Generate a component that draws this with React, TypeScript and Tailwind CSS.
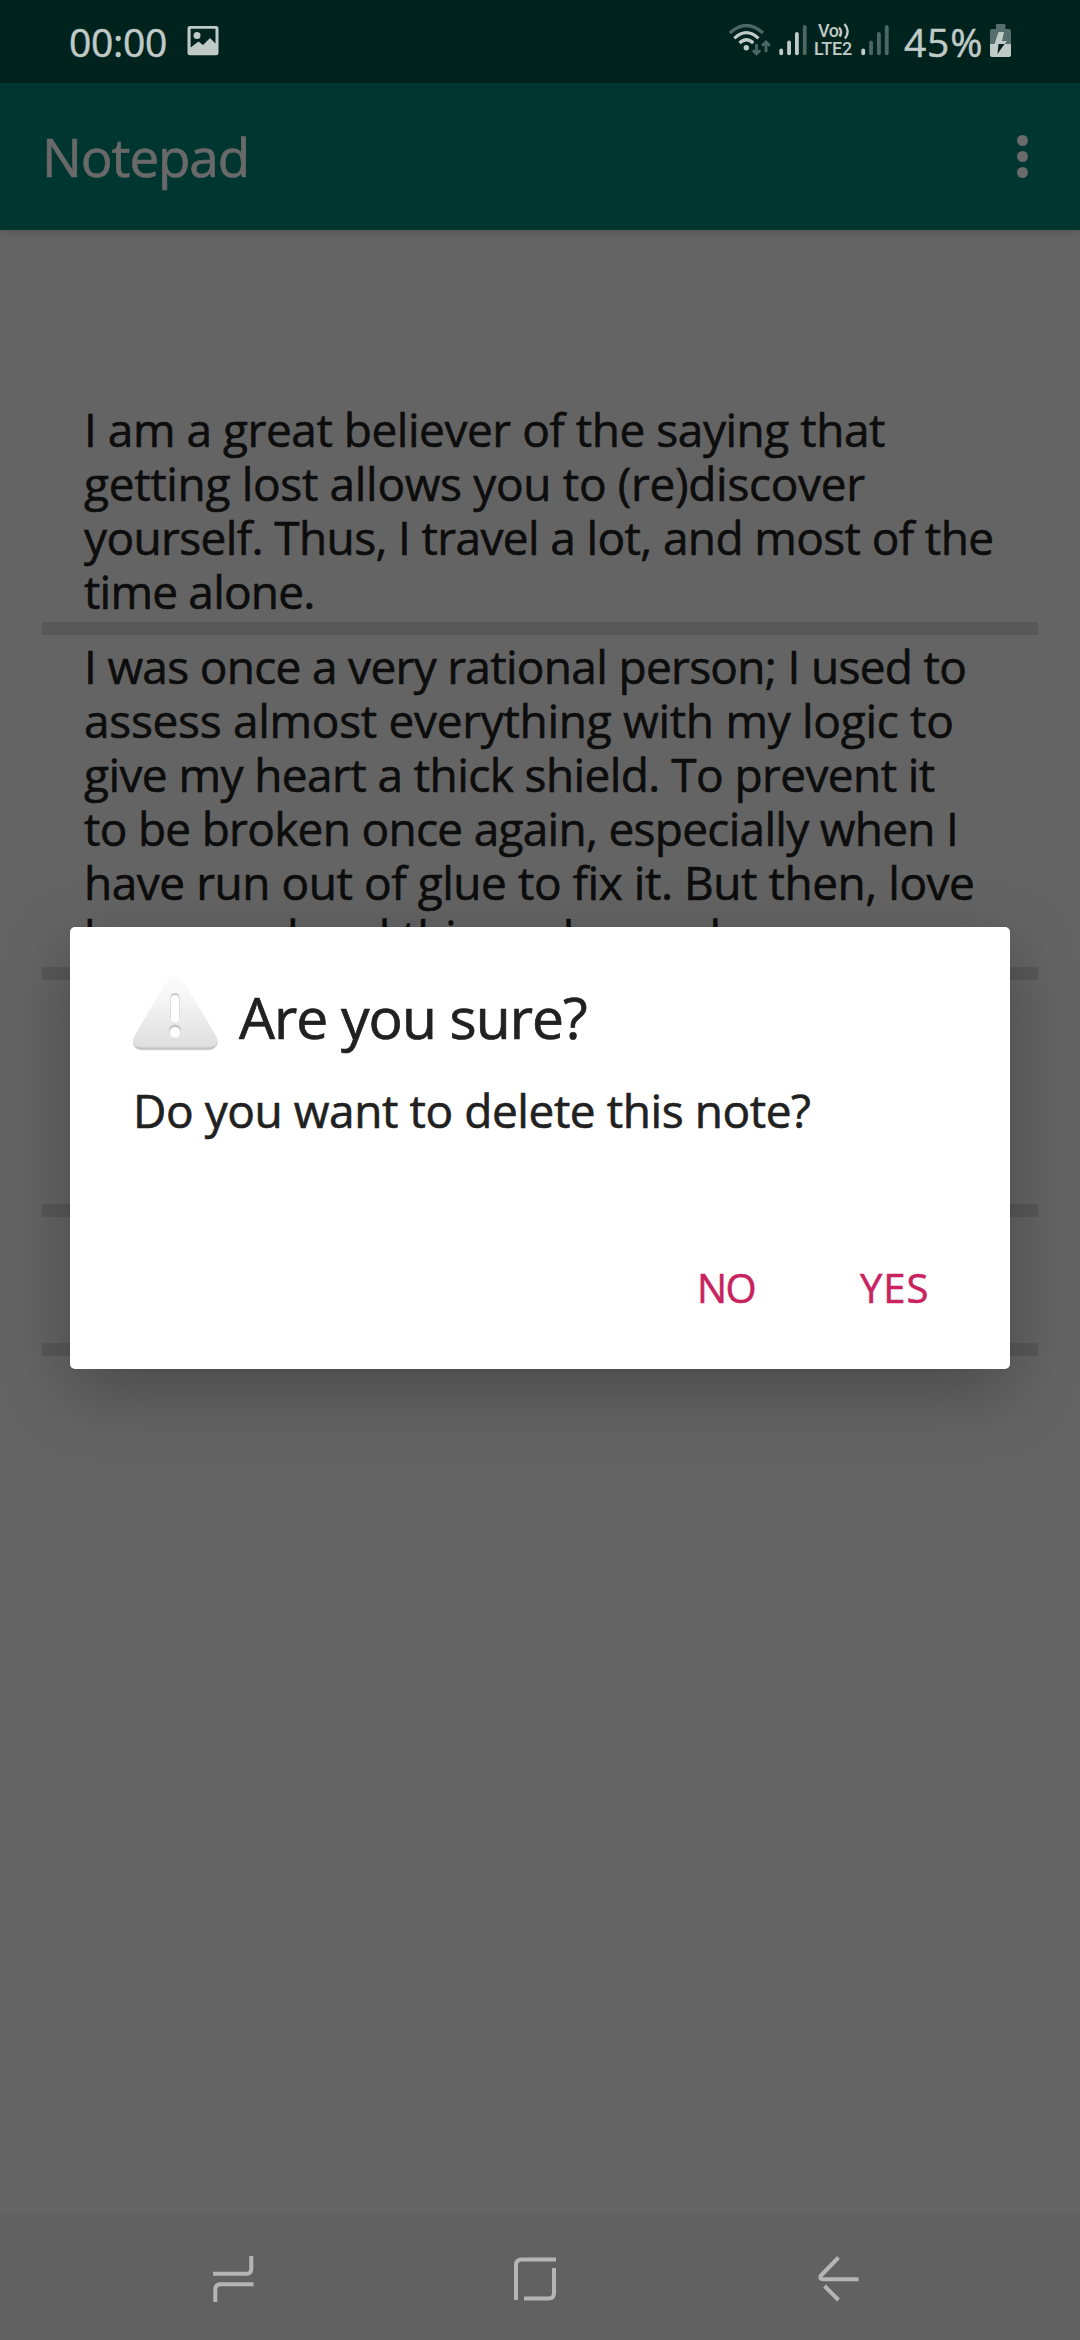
import type { ReactNode } from "react";

function ImageIcon() {
  return (
    <svg width="32" height="30" viewBox="0 0 32 30" className="fill-[#c0cac7]">
      <path
        fillRule="evenodd"
        d="M3 0H29Q31.5 0 31.5 2.5V27Q31.5 29.3 29 29.3H3Q.5 29.3 .5 27V2.500Q.5 0 3 0ZM3.600 2.800V21.500L11.500 15.500L16 19L23 12L28.500 17.500V2.800Z"
      />
      <circle cx="10" cy="9.5" r="3.500" />
    </svg>
  );
}

function WifiIcon() {
  return (
    <svg width="42" height="34" viewBox="0 0 42 34" fill="none" strokeLinecap="butt">
      <path d="M.8 9Q17.400-6 34 9" stroke="#4d6762" strokeWidth="3.200" />
      <path d="M5.300 14.300Q17.400 3 29.500 14.300" stroke="#c0cac7" strokeWidth="3.200" />
      <path d="M10.500 19Q17.400 12.500 24.300 19" stroke="#c0cac7" strokeWidth="3.200" />
      <circle cx="17.300" cy="23.800" r="2.700" fill="#c0cac7" />
      <path
        d="M27.500 20V30M23.800 26.300L27.500 29.900L31.200 26.300M37 28V18.500M33.200 21.800L37 18L40.800 21.800"
        stroke="#4d6762"
        strokeWidth="2.800"
      />
    </svg>
  );
}

function SignalIcon({ level }: { level: number }) {
  const tops = [26.5, 18.5, 10, 3];
  return (
    <svg width="28" height="34" viewBox="0 0 28 34" strokeWidth="3.800" strokeLinecap="round">
      {tops.map((top, i) => (
        <line
          key={top}
          x1={2.2 + i * 7.85}
          x2={2.2 + i * 7.85}
          y1={top}
          y2={29.3}
          stroke={i < level ? "#c0cac7" : "#4d6762"}
        />
      ))}
    </svg>
  );
}

function VoLteIcon() {
  return (
    <div className="flex w-[41px] flex-col font-[Roboto] text-[18px] font-medium leading-[18px] text-[#c0cac7]">
      <div className="flex pl-1">
        <span className="tracking-[-0.5px]">Vo</span>
        <svg width="13" height="18" viewBox="0 0 13 18" fill="none" stroke="#c0cac7" strokeWidth="2.400">
          <path d="M1 5.500Q5 9.500 1.500 14.500M6.500 2Q12.500 9 7 16.500" />
        </svg>
      </div>
      <span className="tracking-[-0.2px]">LTE2</span>
    </div>
  );
}

function BatteryIcon() {
  return (
    <svg width="21" height="34" viewBox="0 0 21 34">
      <path d="M6 1Q6 0 7 0H14Q15.500 0 15.500 1V5H19Q21 5 21 7V20H0V7Q0 5 2 5H6Z" fill="#566f6a" />
      <path d="M0 20H21V31Q21 33 19 33H2Q0 33 0 31Z" fill="#c0cac7" />
      <path d="M8.500 8H14L12 17H17L14.500 20H4.500Z" fill="#c0cac7" />
      <path d="M8.500 20H14.500L7.500 30Z" fill="#00231e" />
    </svg>
  );
}

function WarningIcon() {
  return (
    <svg width="86" height="78" viewBox="0 0 86 78">
      <defs>
        <linearGradient id="warn" x1="0" y1="0" x2="0" y2="1">
          <stop offset="0" stopColor="#fbfbfb" />
          <stop offset="0.3" stopColor="#f6f6f6" />
          <stop offset="1" stopColor="#dedede" />
        </linearGradient>
      </defs>
      <path d="M35.500 5Q42 -1 48 5Q51 8 83 61Q87 69 82 73Q80 76 75 76H9Q4 76 2 73Q-2 69 2 61Q33 8 35.500 5Z" fill="#f5f5f5" />
      <path d="M2 62H82Q87 68 82 72Q80 74.800 75 74.800H9Q4 74.800 2 72Q-2 68 2 62Z" fill="#c2c2c2" />
      <path d="M35.500 4Q42 -2 48 4Q51 7 82.500 60Q86.500 67 82 70.500Q79 72.500 75 72.500H9Q5 72.500 2 70.500Q-2 67 2 60Q33 7 35.500 4Z" fill="url(#warn)" />
      <rect x="37.500" y="18" width="9" height="28" rx="4.500" fill="#c9c9c9" />
      <rect x="38" y="20" width="8" height="27" rx="4" fill="#fff" />
      <circle cx="42" cy="55.500" r="6" fill="#c4c4c4" />
      <circle cx="42" cy="57.300" r="5.300" fill="#fff" />
    </svg>
  );
}

function StatusBar() {
  return (
    <div className="flex h-[83px] items-start bg-[#00231e] pl-[69px] pr-[69px] text-[39px] leading-[54px] text-[#c0cac7] [-webkit-text-stroke:0.5px]">
      <span className="w-[118px] pt-[15px] tracking-[-0.3px]">00:00</span>
      <div className="pt-[26px]">
        <ImageIcon />
      </div>
      <div className="ml-auto flex items-start">
        <div className="mr-2 pt-[24px]">
          <WifiIcon />
        </div>
        <div className="mr-[7px] pt-[24px]">
          <SignalIcon level={3} />
        </div>
        <div className="mr-[6px] pt-[22px] [-webkit-text-stroke:0px]">
          <VoLteIcon />
        </div>
        <div className="pt-[24px]">
          <SignalIcon level={1} />
        </div>
        <span className="ml-[15px] w-[86px] whitespace-nowrap pt-[15px] tracking-[0.8px]">45%</span>
        <div className="pt-[24px]">
          <BatteryIcon />
        </div>
      </div>
    </div>
  );
}

function AppBar() {
  return (
    <div className="relative flex h-[147px] items-center justify-between bg-[#003630] pl-[42px] pr-[52px] shadow-[0_2px_6px_rgba(0,0,0,0.15)]">
      <h1 className="text-[53px] leading-[72px] tracking-[-1.1px] text-[#696969] [-webkit-text-stroke:0.7px]">Notepad</h1>
      <div className="flex flex-col gap-[5px]">
        <span className="size-[11px] rounded-full bg-[#6a6a6a]" />
        <span className="size-[11px] rounded-full bg-[#6a6a6a]" />
        <span className="size-[11px] rounded-full bg-[#6a6a6a]" />
      </div>
    </div>
  );
}

function Note({ className, children }: { className: string; children?: ReactNode }) {
  return (
    <li className={`box-content overflow-hidden border-b-[13px] border-[#585858] pl-[42px] pt-1 ${className}`}>
      {children}
    </li>
  );
}

function NavBar() {
  return (
    <nav className="mt-auto flex h-[126px] items-start bg-[#616161] pl-[212px] pt-[40px]">
      <svg width="44" height="50" viewBox="0 0 44 50" fill="none" stroke="#b5b5b5" strokeWidth="4">
        <path d="M1 19.700H34.500Q39.300 19.700 39.300 14.500V2M41.500 30.300H8.500Q3.300 30.300 3.300 36V48" />
      </svg>
      <svg width="46" height="50" viewBox="0 0 46 50" fill="none" stroke="#b5b5b5" strokeWidth="4" className="ml-[256px]">
        <path d="M4 46V11Q4 5.500 9.500 5.500H44M42 14V39Q42 44.500 36.500 44.500H12" />
      </svg>
      <svg width="46" height="50" viewBox="0 0 46 50" fill="none" stroke="#b5b5b5" strokeWidth="4" className="ml-[258px]">
        <path d="M22.500 3.500L5 21.500Q3 25.200 7 25.200H42.500M8.500 32L22.500 46" />
      </svg>
    </nav>
  );
}

function Dialog() {
  return (
    <div
      role="dialog"
      className="flex h-[442px] w-[940px] flex-col rounded-[5px] bg-white pl-[63px] pt-[48px] text-[#212121] shadow-[0_22px_70px_rgba(0,0,0,0.27)]"
    >
      <div className="flex items-start">
        <WarningIcon />
        <h2 className="ml-5 mt-[3px] text-[57px] leading-[78px] tracking-[-1.02px] [-webkit-text-stroke:0.7px]">
          Are you sure?
        </h2>
      </div>
      <p className="mt-[27px] text-[46px] leading-[54px] tracking-[-0.43px] [-webkit-text-stroke:0.6px]">
        Do you want to delete this note?
      </p>
      <div className="mt-[124px] flex text-[40px] leading-[54px] text-[#c9235f] [-webkit-text-stroke:0.5px]">
        <button className="ml-[564px] w-[163px] text-left tracking-[-1.5px]">NO</button>
        <button className="tracking-[1px]">YES</button>
      </div>
    </div>
  );
}

export default function App() {
  return (
    <div className="relative flex h-[2340px] w-[1080px] flex-col overflow-hidden bg-[#646464] font-['Open_Sans',sans-serif]">
      <StatusBar />
      <AppBar />
      <ul className="mx-[42px] mt-[168px] whitespace-nowrap text-[46px] leading-[54px] text-[#0d0d0d] [-webkit-text-stroke:0.6px]">
        <Note className="h-[220px]">
          <span className="block tracking-[-0.47px]">I am a great believer of the saying that </span>
          <span className="block tracking-[-0.33px]">getting lost allows you to (re)discover </span>
          <span className="block tracking-[-0.63px]">yourself. Thus, I travel a lot, and most of the </span>
          <span className="block tracking-[-0.8px]">time alone.</span>
        </Note>
        <Note className="h-[328px]">
          <span className="block tracking-[-0.69px]">I was once a very rational person; I used to </span>
          <span className="block tracking-[-0.3px]">assess almost everything with my logic to </span>
          <span className="block tracking-[-0.59px]">give my heart a thick shield. To prevent it </span>
          <span className="block tracking-[-0.71px]">to be broken once again, especially when I </span>
          <span className="block tracking-[-0.46px]">have run out of glue to fix it. But then, love </span>
          <span className="block tracking-[-0.5px]">happened and things changed.</span>
        </Note>
        <Note className="h-[220px]" />
        <Note className="h-[122px]" />
      </ul>
      <NavBar />
      <div className="absolute inset-0 flex items-start justify-center pt-[927px]">
        <Dialog />
      </div>
    </div>
  );
}
